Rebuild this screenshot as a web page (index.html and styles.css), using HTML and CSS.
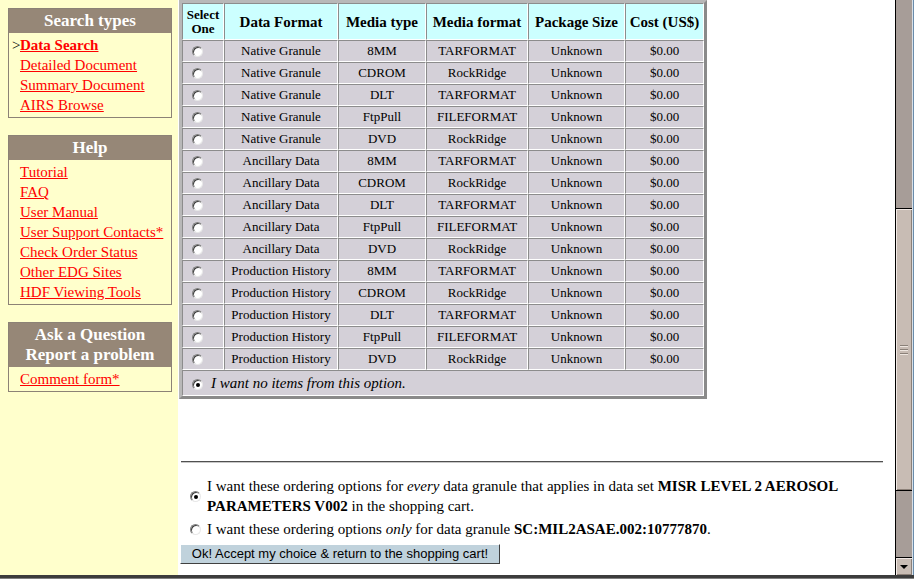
FILE: index.html
```html
<!DOCTYPE html>
<html>
<head>
<meta charset="utf-8">
<title>Ordering options</title>
<link rel="stylesheet" href="styles.css">
</head>
<body>
<div class="window">
  <div class="page">
    <aside class="sidebar">
      <section class="box">
        <h2 class="box-title">Search types</h2>
        <ul class="box-links">
          <li class="current"><span class="marker">&gt;</span><a href="#">Data Search</a></li>
          <li><span class="marker"></span><a href="#">Detailed Document</a></li>
          <li><span class="marker"></span><a href="#">Summary Document</a></li>
          <li><span class="marker"></span><a href="#">AIRS Browse</a></li>
        </ul>
      </section>
      <section class="box">
        <h2 class="box-title">Help</h2>
        <ul class="box-links">
          <li><span class="marker"></span><a href="#">Tutorial</a></li>
          <li><span class="marker"></span><a href="#">FAQ</a></li>
          <li><span class="marker"></span><a href="#">User Manual</a></li>
          <li><span class="marker"></span><a href="#">User Support Contacts*</a></li>
          <li><span class="marker"></span><a href="#">Check Order Status</a></li>
          <li><span class="marker"></span><a href="#">Other EDG Sites</a></li>
          <li><span class="marker"></span><a href="#">HDF Viewing Tools</a></li>
        </ul>
      </section>
      <section class="box">
        <h2 class="box-title">Ask a Question<br>Report a problem</h2>
        <ul class="box-links">
          <li><span class="marker"></span><a href="#">Comment form*</a></li>
        </ul>
      </section>
    </aside>

    <main class="main">
      <table class="options">
        <colgroup>
          <col class="c-sel"><col class="c-fmt"><col class="c-mtype"><col class="c-mfmt"><col class="c-size"><col class="c-cost">
        </colgroup>
        <thead>
          <tr class="head-row">
            <th class="th-select">Select<br>One</th>
            <th>Data Format</th>
            <th>Media type</th>
            <th>Media format</th>
            <th>Package Size</th>
            <th>Cost (US$)</th>
          </tr>
        </thead>
        <tbody>
          <tr><td class="sel"><span class="radio"></span></td><td>Native Granule</td><td>8MM</td><td>TARFORMAT</td><td>Unknown</td><td>$0.00</td></tr>
          <tr><td class="sel"><span class="radio"></span></td><td>Native Granule</td><td>CDROM</td><td>RockRidge</td><td>Unknown</td><td>$0.00</td></tr>
          <tr><td class="sel"><span class="radio"></span></td><td>Native Granule</td><td>DLT</td><td>TARFORMAT</td><td>Unknown</td><td>$0.00</td></tr>
          <tr><td class="sel"><span class="radio"></span></td><td>Native Granule</td><td>FtpPull</td><td>FILEFORMAT</td><td>Unknown</td><td>$0.00</td></tr>
          <tr><td class="sel"><span class="radio"></span></td><td>Native Granule</td><td>DVD</td><td>RockRidge</td><td>Unknown</td><td>$0.00</td></tr>
          <tr><td class="sel"><span class="radio"></span></td><td>Ancillary Data</td><td>8MM</td><td>TARFORMAT</td><td>Unknown</td><td>$0.00</td></tr>
          <tr><td class="sel"><span class="radio"></span></td><td>Ancillary Data</td><td>CDROM</td><td>RockRidge</td><td>Unknown</td><td>$0.00</td></tr>
          <tr><td class="sel"><span class="radio"></span></td><td>Ancillary Data</td><td>DLT</td><td>TARFORMAT</td><td>Unknown</td><td>$0.00</td></tr>
          <tr><td class="sel"><span class="radio"></span></td><td>Ancillary Data</td><td>FtpPull</td><td>FILEFORMAT</td><td>Unknown</td><td>$0.00</td></tr>
          <tr><td class="sel"><span class="radio"></span></td><td>Ancillary Data</td><td>DVD</td><td>RockRidge</td><td>Unknown</td><td>$0.00</td></tr>
          <tr><td class="sel"><span class="radio"></span></td><td>Production History</td><td>8MM</td><td>TARFORMAT</td><td>Unknown</td><td>$0.00</td></tr>
          <tr><td class="sel"><span class="radio"></span></td><td>Production History</td><td>CDROM</td><td>RockRidge</td><td>Unknown</td><td>$0.00</td></tr>
          <tr><td class="sel"><span class="radio"></span></td><td>Production History</td><td>DLT</td><td>TARFORMAT</td><td>Unknown</td><td>$0.00</td></tr>
          <tr><td class="sel"><span class="radio"></span></td><td>Production History</td><td>FtpPull</td><td>FILEFORMAT</td><td>Unknown</td><td>$0.00</td></tr>
          <tr><td class="sel"><span class="radio"></span></td><td>Production History</td><td>DVD</td><td>RockRidge</td><td>Unknown</td><td>$0.00</td></tr>
          <tr class="none-row"><td colspan="6" class="none-cell"><span class="radio checked"></span><em class="none-text">I want no items from this option.</em></td></tr>
        </tbody>
      </table>

      <hr class="rule">

      <div class="choice choice-every">
        <span class="radio checked"></span>
        <p class="choice-text">I want these ordering options for <em>every</em> data granule that applies in data set <b>MISR LEVEL 2 AEROSOL PARAMETERS V002</b> in the shopping cart.</p>
      </div>
      <div class="choice choice-only">
        <span class="radio"></span>
        <p class="choice-text">I want these ordering options <em>only</em> for data granule <b>SC:MIL2ASAE.002:10777870</b>.</p>
      </div>
      <button class="accept" type="button">Ok! Accept my choice &amp; return to the shopping cart!</button>
    </main>

    <div class="scrollbar">
      <div class="track track-top"></div>
      <div class="thumb"><span class="grip"></span><span class="grip"></span><span class="grip"></span></div>
      <div class="track track-bottom"></div>
      <div class="arrow-btn"><span class="arrow-down"></span></div>
    </div>
    <div class="frame-right"></div>
  </div>
  <div class="frame-bottom"></div>
</div>
</body>
</html>
```

FILE: styles.css
```css
* { box-sizing: border-box; }

html, body {
  margin: 0;
  padding: 0;
  width: 914px;
  height: 579px;
  overflow: hidden;
  background: #ffffff;
  font-family: "Liberation Serif", "Times New Roman", serif;
  color: #000;
}

.window {
  width: 914px;
  height: 579px;
  display: flex;
  flex-direction: column;
}

.page {
  flex: 1;
  display: flex;
  min-height: 0;
}

/* ---------- Sidebar ---------- */
.sidebar {
  width: 178px;
  flex: none;
  background: #ffffcc;
  padding: 8px 6px 0 8px;
  display: flex;
  flex-direction: column;
  gap: 17px;
}

.box {
  width: 164px;
  border: 1px solid #8c8276;
}

.box-title {
  margin: 0;
  background: #968777;
  color: #ffffff;
  font-size: 17px;
  font-weight: bold;
  line-height: 20px;
  text-align: center;
  padding: 2px 0 2px;
}

.box-links {
  list-style: none;
  margin: 0;
  padding: 2px 0 2px 3px;
  font-size: 15px;
  line-height: 20px;
}

.box-links li {
  display: flex;
  white-space: nowrap;
}

.marker {
  display: inline-block;
  width: 8px;
  flex: none;
  color: #000;
}

.box-links a {
  color: #ff0000;
  text-decoration: underline;
}

.box-links .current a {
  font-weight: bold;
}

/* ---------- Main ---------- */
.main {
  flex: 1;
  min-width: 0;
  background: #ffffff;
  padding-left: 1px;
}

.options {
  width: 528px;
  table-layout: fixed;
  border-collapse: separate;
  border-spacing: 0;
  border: 3px solid;
  border-color: #b8b8b8 #8a8a8a #8a8a8a #b8b8b8;
  background: #d4d0d8;
}

.c-sel { width: 42px; }
.c-fmt { width: 114px; }
.c-mtype { width: 88px; }
.c-mfmt { width: 102px; }
.c-size { width: 97px; }
.c-cost { width: 79px; }

.options th,
.options td {
  border-style: solid;
  border-width: 1px;
  border-color: #8c8c8c #ffffff #ffffff #8c8c8c;
  padding: 0;
  text-align: center;
  vertical-align: middle;
}

.head-row {
  height: 37px;
}

.options th {
  background: #ccffff;
  font-size: 15px;
  font-weight: bold;
  line-height: 18px;
  white-space: nowrap;
}

.options th.th-select {
  font-size: 13px;
  line-height: 14px;
}

.options tbody tr {
  height: 22px;
}

.options td {
  background: #d4d0d8;
  font-size: 13px;
  line-height: 16px;
  white-space: nowrap;
}

.options td.sel {
  text-align: left;
  padding-left: 9px;
  line-height: 0;
}

.options tr.none-row {
  height: 26px;
}

.options td.none-cell {
  text-align: left;
  padding-left: 9px;
  font-size: 15px;
}

.none-text {
  margin-left: 8px;
}

/* radio buttons */
.radio {
  display: inline-block;
  width: 11px;
  height: 11px;
  border-radius: 50%;
  background: #ffffff;
  border: 1px solid;
  border-color: #808080 #e8e8e8 #e8e8e8 #808080;
  box-shadow: inset 1px 1px 0 #404040;
  vertical-align: middle;
  position: relative;
}

.radio.checked::after {
  content: "";
  position: absolute;
  left: 3px;
  top: 3px;
  width: 4px;
  height: 4px;
  border-radius: 50%;
  background: #000;
}

/* rule and choices */
.rule {
  margin: 62px 12px 0 2px;
  border: 0;
  border-top: 1px solid #505050;
  border-bottom: 1px solid #c8c8c8;
  height: 2px;
}

.choice {
  display: flex;
  align-items: center;
  padding-left: 11px;
}

.choice-every {
  margin-top: 13px;
}

.choice-only {
  margin-top: 3px;
}

.choice .radio {
  flex: none;
}

.choice-text {
  margin: 0 14px 0 6px;
  font-size: 15px;
  line-height: 20px;
}

.accept {
  display: block;
  margin: 5px 0 0 1px;
  width: 320px;
  height: 20px;
  padding: 0 0 1px;
  background: #c0d2dc;
  border: 1px solid;
  border-color: #ffffff #404040 #404040 #ffffff;
  font-family: "Liberation Sans", Arial, sans-serif;
  font-size: 13px;
  color: #000;
  text-align: center;
}

/* ---------- Fake browser scrollbar ---------- */
.scrollbar {
  width: 17px;
  flex: none;
  border-left: 1px solid #000;
  display: flex;
  flex-direction: column;
  background: #a79d98;
}

.track-top {
  height: 208px;
  flex: none;
}

.thumb {
  height: 283px;
  flex: none;
  background: #c8bcb4;
  border-top: 1px solid #000;
  border-bottom: 1px solid #000;
  box-shadow: inset 1px 1px 0 #f0e8e4, inset -1px -1px 0 #8c8078;
  display: flex;
  flex-direction: column;
  align-items: center;
  justify-content: center;
  gap: 2px;
}

.grip {
  display: block;
  width: 8px;
  height: 2px;
  border-top: 1px solid #8a8078;
  border-bottom: 1px solid #eee6e0;
}

.track-bottom {
  flex: 1;
}

.arrow-btn {
  height: 18px;
  flex: none;
  background: #c8bcb4;
  border-top: 1px solid #000;
  box-shadow: inset 1px 1px 0 #f0e8e4, inset -1px -1px 0 #8c8078;
  display: flex;
  align-items: center;
  justify-content: center;
}

.arrow-down {
  width: 0;
  height: 0;
  border-left: 4px solid transparent;
  border-right: 4px solid transparent;
  border-top: 4px solid #000;
}

.frame-right {
  width: 2px;
  flex: none;
  background: #6a8cab;
  border-left: 1px solid #d8e0e8;
}

.frame-bottom {
  height: 4px;
  flex: none;
  background: #3c3c3c;
  border-bottom: 1px solid #808080;
}
```
